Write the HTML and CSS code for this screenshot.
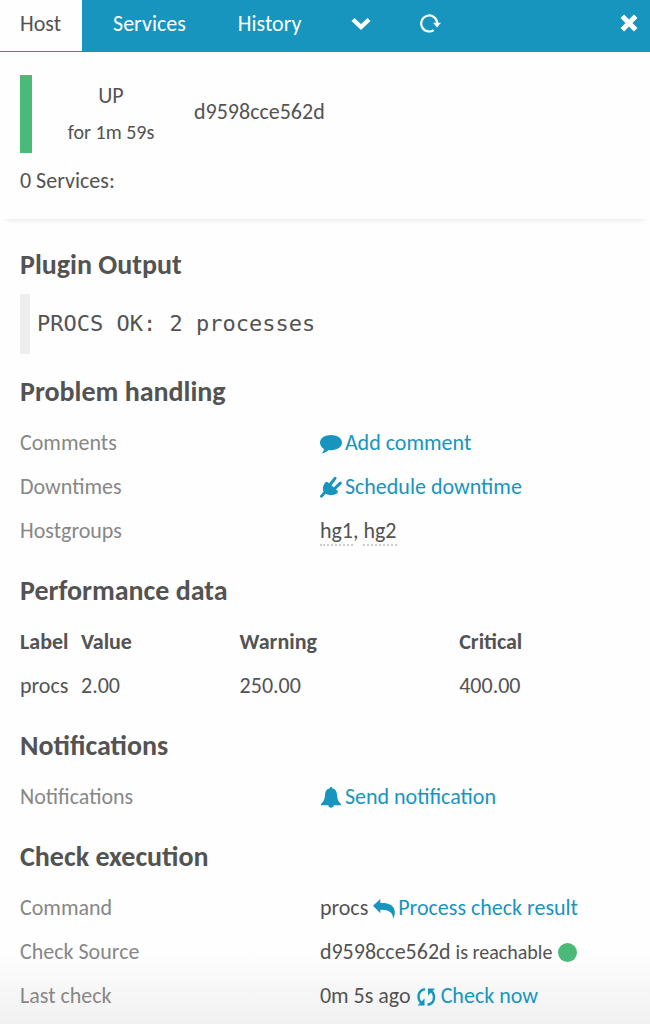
FILE: index.html
```html
<!DOCTYPE html>
<html lang="en">
<head>
<meta charset="utf-8">
<title>Host d9598cce562d</title>
<link rel="stylesheet" href="styles.css">
</head>
<body>
<header class="tabs">
  <nav class="tab-list" aria-label="Host views">
    <a class="tab active" href="#host" aria-current="page">Host</a>
    <a class="tab" href="#services">Services</a>
    <a class="tab" href="#history">History</a>
  </nav>
  <button class="tool" type="button" aria-label="More"><svg width="20" height="20" viewBox="0 0 20 20"><path d="M2 6.500l8 7.500 8-7.500" fill="none" stroke="#fff" stroke-width="4.400" stroke-linejoin="miter"/></svg></button>
  <button class="tool" type="button" aria-label="Refresh"><svg width="21" height="20" viewBox="0 0 21 20"><path d="M13.700 17.100A8 8 0 1 1 17.200 10" fill="none" stroke="#fff" stroke-width="2.200"/><path d="M13 9.800h8l-4 4.600z" fill="#fff"/></svg></button>
  <button class="tool close" type="button" aria-label="Close"><svg width="18" height="18" viewBox="0 0 18 18"><path d="M2.300 2.300l13.400 13.400M15.700 2.300L2.300 15.700" stroke="#fff" stroke-width="5"/></svg></button>
</header>

<section class="summary">
  <div class="host">
    <div class="state"><span>UP</span><small>for 1m 59s</small></div>
    <div class="name">d9598cce562d</div>
  </div>
  <p class="count">0 Services:</p>
</section>

<main class="content">
  <h2>Plugin Output</h2>
  <pre class="output">PROCS OK: 2 processes</pre>

  <h2>Problem handling</h2>
  <table class="info">
    <tr><th scope="row">Comments</th><td><a href="#comment"><svg class="icon" width="22" height="20" viewBox="0 0 22 20"><path d="M11 1c6 0 11 3 11 7.600s-5 7.600-11 7.600q-1.500 0-2.600-.2C7 18 4.500 19.200 1.800 19.400c1.400-1.400 2-2.600 2.200-4.400C1.500 13.600 0 11.300 0 8.600 0 4 5 1 11 1z"/></svg>Add comment</a></td></tr>
    <tr><th scope="row">Downtimes</th><td><a href="#downtime"><svg class="icon" width="22" height="22" viewBox="0 0 22 22"><path d="M4.500 7.500Q6 5 7.800 6.300L17.500 14.800Q18.800 16.200 16.800 17.500C13.500 19.600 9 19.800 5.800 17.800L1.600 22 0 20.800V19.800L3.500 15.800C2.400 13 2.800 10.200 4.500 7.500z"/><path d="M9.800 9L15 2.300M14.200 13L20.300 7.200" stroke="currentColor" stroke-width="3" stroke-linecap="round"/></svg>Schedule downtime</a></td></tr>
    <tr><th scope="row">Hostgroups</th><td><a class="group" href="#hg1">hg1</a>, <a class="group" href="#hg2">hg2</a></td></tr>
  </table>

  <h2>Performance data</h2>
  <table class="perf">
    <thead><tr><th scope="col">Label</th><th scope="col">Value</th><th scope="col">Warning</th><th scope="col">Critical</th></tr></thead>
    <tbody><tr><td>procs</td><td>2.00</td><td>250.00</td><td>400.00</td></tr></tbody>
  </table>

  <h2>Notifications</h2>
  <table class="info">
    <tr><th scope="row">Notifications</th><td><a href="#notify"><svg class="icon" width="22" height="22" viewBox="0 0 22 22"><path d="M10 1.500q1-1.600 2 0v.7c3.500.8 4.800 3 5 6.300.2 4 .8 6.500 4 9.500v1.200h-7.200c0 3.200-5 3.200-5.300.6L8 19.200H1V18c3.200-3 3.800-5.500 4-9.500.2-3.300 1.500-5.500 5-6.300z"/></svg>Send notification</a></td></tr>
  </table>

  <h2>Check execution</h2>
  <table class="info">
    <tr><th scope="row">Command</th><td>procs <a href="#process"><svg class="icon" width="22" height="20" viewBox="0 0 22 20"><path d="M0 6.800L7.300 0v4c8-.4 14.500 2 14.500 9.300 0 2.500-.6 4.500-1.800 6.500.2-6.500-4.500-9.300-12.700-9v3.500z"/></svg>Process check result</a></td></tr>
    <tr><th scope="row">Check Source</th><td>d9598cce562d <small>is reachable</small> <svg class="icon dot" width="20" height="20" viewBox="0 0 20 20"><circle cx="10.500" cy="9.500" r="9.500"/></svg></td></tr>
    <tr><th scope="row">Last check</th><td>0m 5s ago <a href="#check"><svg class="icon" width="22" height="20" viewBox="0 0 22 20"><g fill="none" stroke="currentColor" stroke-width="2.400"><path d="M9 2.200C1.500 3.200 .6 12 5.800 16.500"/><path d="M11.500 17.800C19 16.800 19.900 8 14.700 3.500"/></g><path d="M8.500 11.500v7H1.500z"/><path d="M12 8.500V1.500h7z"/></svg>Check now</a></td></tr>
  </table>
</main>
</body>
</html>
```

FILE: styles.css
```css
* { box-sizing: border-box; }

body {
  margin: 0;
  min-height: 100vh;
  color: #535353;
  font: 22px/24px Calibri, Carlito, Lato, sans-serif;
  background: #fefefe linear-gradient(#fefefe, #f1f1f1) bottom / 100% 74px no-repeat;
}

a { color: #1795bf; text-decoration: none; }
small { font-size: 20px; }

.tabs { display: flex; height: 52px; background: #1795bf; }
.tab-list { display: flex; }
.tab { padding: 12px 26px; color: #fff; }
.tab.active { height: 51px; margin-right: 5px; padding: 12px 21px 12px 20px; color: #535353; background: #fefefe; }
.tool { display: flex; align-items: center; width: 69px; padding: 0 24px 6px; border: 0; background: none; cursor: pointer; }
.tool svg { flex: none; }
.close { width: auto; margin-left: auto; padding: 0 12px 6px; }

.summary { padding: 23px 20px 26px; box-shadow: 0 6px 6px -6px rgba(0, 0, 0, .15); }
.host { display: flex; align-items: center; }
.state {
  display: flex;
  flex-direction: column;
  align-items: center;
  justify-content: center;
  gap: 12px;
  width: 170px;
  height: 78px;
  border-left: 12px solid #4bb978;
}
.name { padding: 0 0 4px 4px; }
.count { margin: 16px 0 0; }

.content { padding: 8px 20px 6px; }
h2 { margin: 22px 0 13px; font-size: 28px; line-height: 32px; font-weight: 700; }
.output {
  margin: 0;
  padding: 16px 7px;
  border-left: 10px solid #eee;
  font: 22px/28px "DejaVu Sans Mono", monospace;
  white-space: pre-wrap;
}

table { width: 100%; border-collapse: collapse; table-layout: fixed; }
th, td { height: 44px; padding: 0; text-align: left; white-space: nowrap; }
.info th { width: 49%; font-weight: 400; color: #878787; }
.info td { padding-left: 1px; }
.perf th:nth-child(1) { width: 10%; }
.perf th:nth-child(2) { width: 26%; }
.perf th:nth-child(3) { width: 36%; }

.icon { margin-right: 3px; vertical-align: -4px; fill: currentColor; }
.dot { color: #4bb978; }
.group { color: inherit; border-bottom: 2px dotted #ccc; }
```
